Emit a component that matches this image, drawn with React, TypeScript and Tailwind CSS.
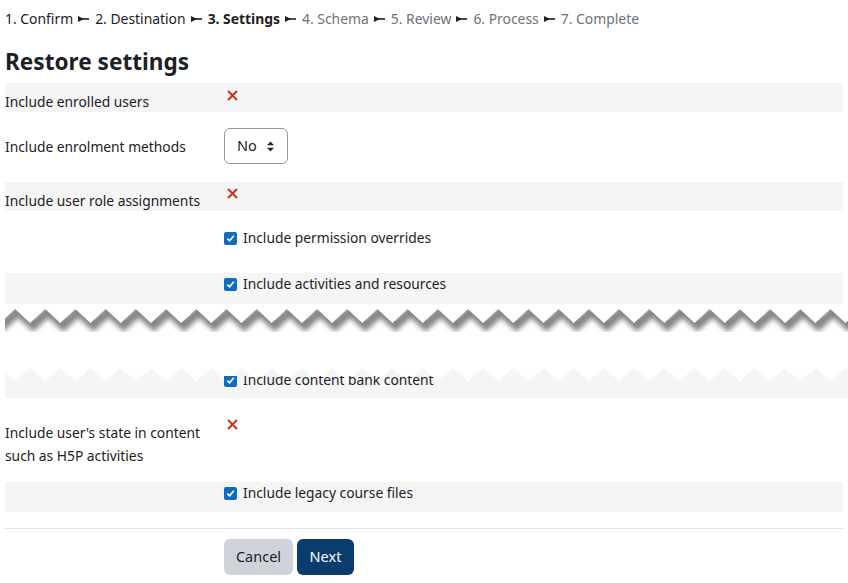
import React from "react"

const steps = [
	{ label: "1. Confirm", state: "done" },
	{ label: "2. Destination", state: "done" },
	{ label: "3. Settings", state: "current" },
	{ label: "4. Schema", state: "todo" },
	{ label: "5. Review", state: "todo" },
	{ label: "6. Process", state: "todo" },
	{ label: "7. Complete", state: "todo" }
]

const PERIOD = 30.2
const TEETH = 30

const Sep = () => (
	<svg width="12" height="8" viewBox="0 0 12 8" className="mx-[5px] inline-block">
		<polygon points="0,1 6,4 0,7" fill="#1d2125" />
		<rect x="4" y="3.2" width="7" height="1.6" fill="#1d2125" />
	</svg>
)

const Cross = () => (
	<svg width="11" height="11" viewBox="0 0 11 11">
		<path d="M1 1 L10 10 M10 1 L1 10" stroke="#ca3120" strokeWidth="2" />
	</svg>
)

const Check = () => (
	<span className="inline-flex h-[13px] w-[13px] shrink-0 items-center justify-center rounded-[2px] bg-[#0f6cbf]">
		<svg width="9" height="9" viewBox="0 0 9 9">
			<path
				d="M1.3 4.6 L3.6 6.8 L7.8 1.8"
				stroke="white"
				strokeWidth="1.7"
				fill="none"
			/>
		</svg>
	</span>
)

// shadow under the upper torn edge
const TornTop = () => {
	const pts: string[] = []
	for (let i = -1; i <= TEETH; i++) {
		pts.push(`${10 + i * PERIOD},3`)
		pts.push(`${10 + i * PERIOD + PERIOD / 2},17`)
	}
	const line = pts.join(" ")
	const clip = `${line} 843,40 0,40`
	return (
		<svg width="843" height="32" className="block">
			<defs>
				<clipPath id="belowEdge">
					<polygon points={clip} />
				</clipPath>
				<filter id="soft" x="-10%" y="-50%" width="120%" height="200%">
					<feGaussianBlur stdDeviation="2.8" />
				</filter>
			</defs>
			<g clipPath="url(#belowEdge)">
				<polyline
					points={line}
					transform="translate(3,2)"
					stroke="#858585"
					strokeWidth="10"
					fill="none"
					filter="url(#soft)"
				/>
			</g>
		</svg>
	)
}

// grey background with zigzag top for the row under the tear
const TornBottom = () => {
	const pts: string[] = []
	for (let i = -1; i <= TEETH; i++) {
		pts.push(`${10 + i * PERIOD},14`)
		pts.push(`${10 + i * PERIOD + PERIOD / 2},1`)
	}
	return (
		<svg width="843" height="31" className="absolute left-0 top-0">
			<polygon points={`${pts.join(" ")} 843,31 0,31`} fill="#f5f5f5" />
		</svg>
	)
}

const Label = ({ children, className = "" }: { children: React.ReactNode; className?: string }) => (
	<div className={`w-[219px] shrink-0 leading-[22px] ${className}`}>{children}</div>
)

const CheckItem = ({ text }: { text: string }) => (
	<div className="flex items-center gap-[6px] self-start leading-[22px]">
		<Check />
		<span>{text}</span>
	</div>
)

export default function App() {
	return (
		<div className="min-h-[583px] bg-white px-[5px] text-[13.8px] text-[#1d2125] font-['Noto_Sans',sans-serif]">
			{/* Steps */}
			<div className="flex items-center pt-[8px] text-[13.9px] leading-[22px]">
				{steps.map((s, i) => (
					<React.Fragment key={s.label}>
						{i > 0 && <Sep />}
						<span
							className={
								s.state === "current"
									? "font-bold"
									: s.state === "todo"
										? "text-[#6a737b]"
										: ""
							}
						>
							{s.label}
						</span>
					</React.Fragment>
				))}
			</div>

			<h2 className="mt-[17px] text-[22.6px] font-bold leading-[30px]">Restore settings</h2>

			<div className="mt-[6px] flex flex-col">
				{/* Include enrolled users */}
				<div className="flex h-[29px] bg-[#f5f5f5]">
					<Label className="pt-[8px]">Include enrolled users</Label>
					<div className="pl-[3px] pt-[7px]">
						<Cross />
					</div>
				</div>

				{/* Enrolment methods */}
				<div className="flex h-[70px]">
					<Label className="pt-[24px]">Include enrolment methods</Label>
					<div className="pt-[16px]">
						<div className="flex h-[36px] w-[64px] items-center justify-between rounded-[6px] border border-[#8f959e] pl-[12px] pr-[13px]">
							<span className="text-[14.5px]">No</span>
							<svg width="7" height="11" viewBox="0 0 7 11">
								<polygon points="0,4.3 3.5,0.5 7,4.3" fill="#1d2125" />
								<polygon points="0,6.7 3.5,10.5 7,6.7" fill="#1d2125" />
							</svg>
						</div>
					</div>
				</div>

				{/* User role assignments */}
				<div className="flex h-[29px] bg-[#f5f5f5]">
					<Label className="pt-[8px]">Include user role assignments</Label>
					<div className="pl-[3px] pt-[6px]">
						<Cross />
					</div>
				</div>

				{/* Permission overrides */}
				<div className="flex h-[62px]">
					<Label>{""}</Label>
					<div className="pt-[16px]">
						<CheckItem text="Include permission overrides" />
					</div>
				</div>

				{/* Activities and resources */}
				<div className="flex h-[31px] bg-[#f5f5f5]">
					<Label>{""}</Label>
					<CheckItem text="Include activities and resources" />
				</div>

				{/* Torn section */}
				<div className="h-[63px] pt-[2px]">
					<TornTop />
				</div>

				{/* Content bank, cut by the tear */}
				<div className="relative h-[31px]">
					<TornBottom />
					<div className="relative flex h-full">
						<Label>{""}</Label>
						<div className="mt-[9px] h-[22px] overflow-hidden">
							<div className="-mt-[7px]">
								<CheckItem text="Include content bank content" />
							</div>
						</div>
					</div>
				</div>

				{/* User's state */}
				<div className="flex h-[84px]">
					<Label className="pr-[10px] pt-[23px] leading-[23px]">
						Include user's state in content such as H5P activities
					</Label>
					<div className="pl-[3px] pt-[21px]">
						<Cross />
					</div>
				</div>

				{/* Legacy files */}
				<div className="flex h-[30px] bg-[#f5f5f5]">
					<Label>{""}</Label>
					<CheckItem text="Include legacy course files" />
				</div>
			</div>

			<div className="mt-[16px] h-px bg-[#dee2e6]" />

			<div className="mt-[10px] flex gap-[4px] pl-[219px]">
				<button className="h-[36px] w-[69px] rounded-[6px] bg-[#ced4da] text-[14.5px] text-[#1d2125]">
					Cancel
				</button>
				<button className="h-[36px] w-[57px] rounded-[6px] bg-[#0a3c6e] text-[14.5px] text-white">
					Next
				</button>
			</div>
		</div>
	)
}
